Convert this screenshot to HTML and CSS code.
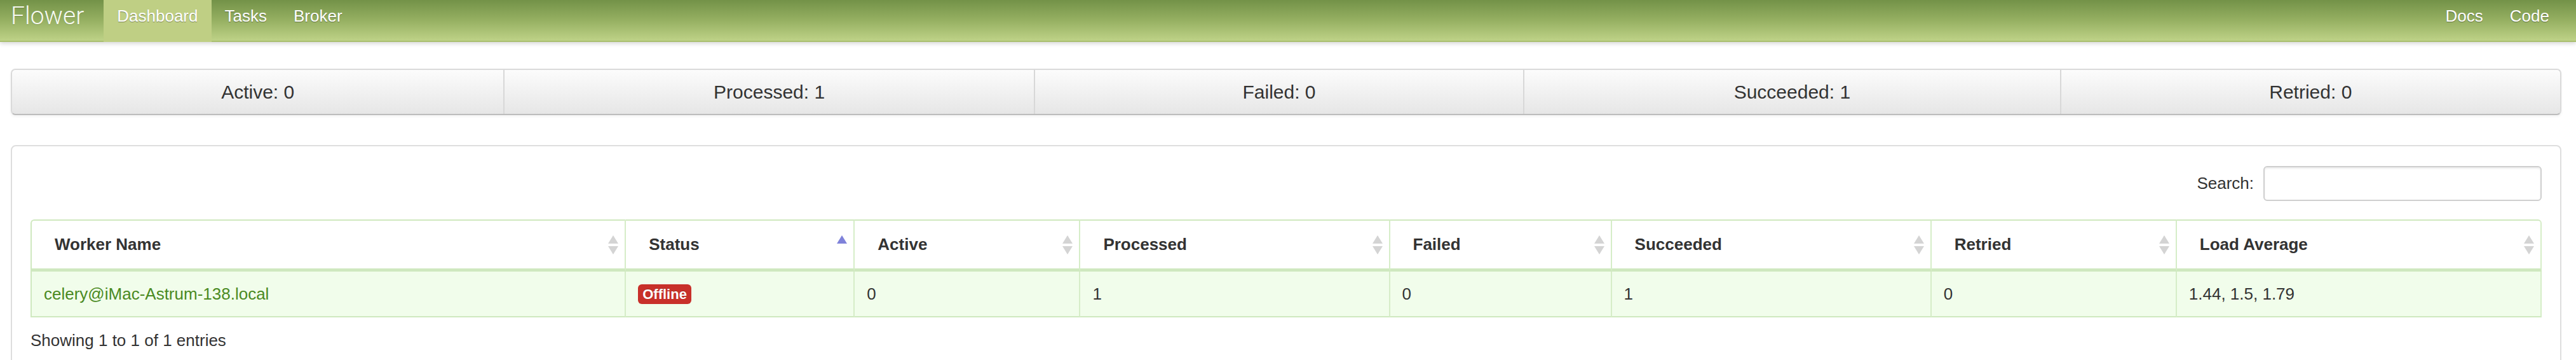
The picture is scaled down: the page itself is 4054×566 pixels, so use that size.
FILE: index.html
```html
<!DOCTYPE html>
<html>
<head>
<meta charset="utf-8">
<title>Flower</title>
<link rel="stylesheet" href="styles.css">
</head>
<body>
<header class="navbar">
  <a class="brand">Flower</a>
  <ul class="nav">
    <li class="nav-item active"><a>Dashboard</a></li>
    <li class="nav-item"><a>Tasks</a></li>
    <li class="nav-item"><a>Broker</a></li>
  </ul>
  <ul class="nav nav-right">
    <li class="nav-item"><a>Docs</a></li>
    <li class="nav-item"><a>Code</a></li>
  </ul>
</header>
<main class="container">
  <div class="stats">
    <div class="stat">Active: 0</div>
    <div class="stat">Processed: 1</div>
    <div class="stat">Failed: 0</div>
    <div class="stat">Succeeded: 1</div>
    <div class="stat">Retried: 0</div>
  </div>
  <section class="panel">
    <div class="toolbar">
      <label class="search-label">Search:</label>
      <input class="search-input" type="text">
    </div>
    <table class="workers">
      <colgroup>
        <col class="c-name"><col class="c-status"><col class="c-active"><col class="c-processed">
        <col class="c-failed"><col class="c-succeeded"><col class="c-retried"><col class="c-load">
      </colgroup>
      <thead>
        <tr>
          <th>Worker Name<svg class="sort" viewBox="0 0 16 30"><polygon points="8,0 16,13 0,13"/><polygon points="0,17 16,17 8,30"/></svg></th>
          <th>Status<svg class="sort sort-asc" viewBox="0 0 16 30"><polygon points="8,0 16,13 0,13"/></svg></th>
          <th>Active<svg class="sort" viewBox="0 0 16 30"><polygon points="8,0 16,13 0,13"/><polygon points="0,17 16,17 8,30"/></svg></th>
          <th>Processed<svg class="sort" viewBox="0 0 16 30"><polygon points="8,0 16,13 0,13"/><polygon points="0,17 16,17 8,30"/></svg></th>
          <th>Failed<svg class="sort" viewBox="0 0 16 30"><polygon points="8,0 16,13 0,13"/><polygon points="0,17 16,17 8,30"/></svg></th>
          <th>Succeeded<svg class="sort" viewBox="0 0 16 30"><polygon points="8,0 16,13 0,13"/><polygon points="0,17 16,17 8,30"/></svg></th>
          <th>Retried<svg class="sort" viewBox="0 0 16 30"><polygon points="8,0 16,13 0,13"/><polygon points="0,17 16,17 8,30"/></svg></th>
          <th>Load Average<svg class="sort" viewBox="0 0 16 30"><polygon points="8,0 16,13 0,13"/><polygon points="0,17 16,17 8,30"/></svg></th>
        </tr>
      </thead>
      <tbody>
        <tr>
          <td><a class="worker-link">celery@iMac-Astrum-138.local</a></td>
          <td><span class="badge">Offline</span></td>
          <td>0</td>
          <td>1</td>
          <td>0</td>
          <td>1</td>
          <td>0</td>
          <td>1.44, 1.5, 1.79</td>
        </tr>
      </tbody>
    </table>
    <div class="info">Showing 1 to 1 of 1 entries</div>
  </section>
</main>
</body>
</html>
```

FILE: styles.css
```css
html, body {
  margin: 0;
  padding: 0;
  overflow: hidden;
  background: #fff;
}
body {
  font-family: "Liberation Sans", Arial, Helvetica, sans-serif;
  font-size: 26px;
  color: #333;
}

/* Navbar */
.navbar {
  display: flex;
  align-items: flex-start;
  height: 64px;
  padding: 0 21px 0 17px;
  background: linear-gradient(to bottom, #739248 0%, #96b062 50%, #bed287 100%);
  border-bottom: 2px solid #a9bf6f;
  box-shadow: 0 3px 6px rgba(0, 0, 0, 0.15);
}
.brand {
  font-family: "Roboto", "Liberation Sans", sans-serif;
  font-weight: 300;
  font-size: 39px;
  line-height: 44px;
  padding-top: 3px;
  color: #f6faf0;
  margin-right: 31px;
  text-shadow: 0 1px 1px rgba(0, 0, 0, 0.15);
}
.nav {
  display: flex;
  list-style: none;
  margin: 0;
  padding: 0;
}
.nav-right {
  margin-left: auto;
}
.nav-item a {
  display: block;
  height: 66px;
  box-sizing: border-box;
  padding: 8px 21px 0;
  line-height: 34px;
  font-size: 26px;
  color: #fff;
  text-shadow: 0 1px 1px rgba(0, 0, 0, 0.35);
}
.nav-item.active a {
  background: #bfcf84;
}

/* Container */
.container {
  padding: 0 23px 0 17px;
}

/* Stats bar */
.stats {
  margin-top: 42px;
  display: grid;
  grid-template-columns: 774fr 835fr 771fr 845fr 788fr;
  height: 73px;
  box-sizing: border-box;
  border: 2px solid #dadada;
  border-bottom-color: #bcbcbc;
  border-radius: 7px;
  background: linear-gradient(to bottom, #fcfcfc, #e6e6e6);
  box-shadow: 0 2px 4px rgba(0, 0, 0, 0.06);
  overflow: hidden;
}
.stat {
  display: flex;
  align-items: center;
  justify-content: center;
  font-size: 30px;
  color: #333;
  border-left: 2px solid #d8d8d8;
}
.stat:first-child {
  border-left: none;
}

/* Panel */
.panel {
  margin-top: 47px;
  border: 2px solid #dedede;
  border-radius: 8px;
  padding: 31px 29px 60px;
}
.toolbar {
  display: flex;
  justify-content: flex-end;
  align-items: center;
}
.search-label {
  font-size: 26px;
  color: #333;
}
.search-input {
  margin-left: 15px;
  width: 438px;
  height: 55px;
  box-sizing: border-box;
  border: 2px solid #cfcfcf;
  border-radius: 6px;
  box-shadow: inset 0 2px 3px rgba(0, 0, 0, 0.08);
  background: #fff;
}

/* Table */
.workers {
  margin-top: 29px;
  width: 100%;
  table-layout: fixed;
  border-collapse: separate;
  border-spacing: 0;
}
.c-name { width: 937px; }
.c-status { width: 360px; }
.c-active { width: 355px; }
.c-processed { width: 487px; }
.c-failed { width: 349px; }
.c-succeeded { width: 503px; }
.c-retried { width: 386px; }
.c-load { width: 574px; }

.workers th {
  position: relative;
  height: 75px;
  padding: 0 0 0 36px;
  text-align: left;
  font-weight: bold;
  font-size: 26px;
  color: #333;
  background: #fff;
  border-top: 2px solid #cfe8bf;
  border-right: 2px solid #d6edc8;
  border-bottom: 5px solid #cfe8bf;
  vertical-align: middle;
}
.workers th:first-child {
  border-left: 2px solid #cfe8bf;
  border-top-left-radius: 6px;
}
.workers th:last-child {
  border-top-right-radius: 6px;
}
.sort {
  position: absolute;
  right: 10px;
  top: 50%;
  transform: translateY(-50%);
  width: 16px;
  height: 30px;
  fill: #d4d4d4;
}
.sort-asc {
  fill: #7f82da;
}
.workers td {
  height: 70px;
  padding: 0 0 0 19px;
  background: #f1fdeb;
  border-right: 2px solid #d6edc8;
  border-bottom: 2px solid #cfe8bf;
  vertical-align: middle;
  font-size: 26px;
  color: #333;
}
.workers td:first-child {
  border-left: 2px solid #cfe8bf;
}
.worker-link {
  color: #4a8a22;
}
.badge {
  display: inline-block;
  height: 31px;
  line-height: 31px;
  padding: 0 7px;
  border-radius: 6px;
  background: #c8302a;
  color: #fff;
  font-weight: bold;
  font-size: 22px;
  text-shadow: 0 -1px 0 rgba(0, 0, 0, 0.2);
}
.info {
  margin-top: 18px;
  line-height: 36px;
  font-size: 26px;
  color: #333;
}
```
